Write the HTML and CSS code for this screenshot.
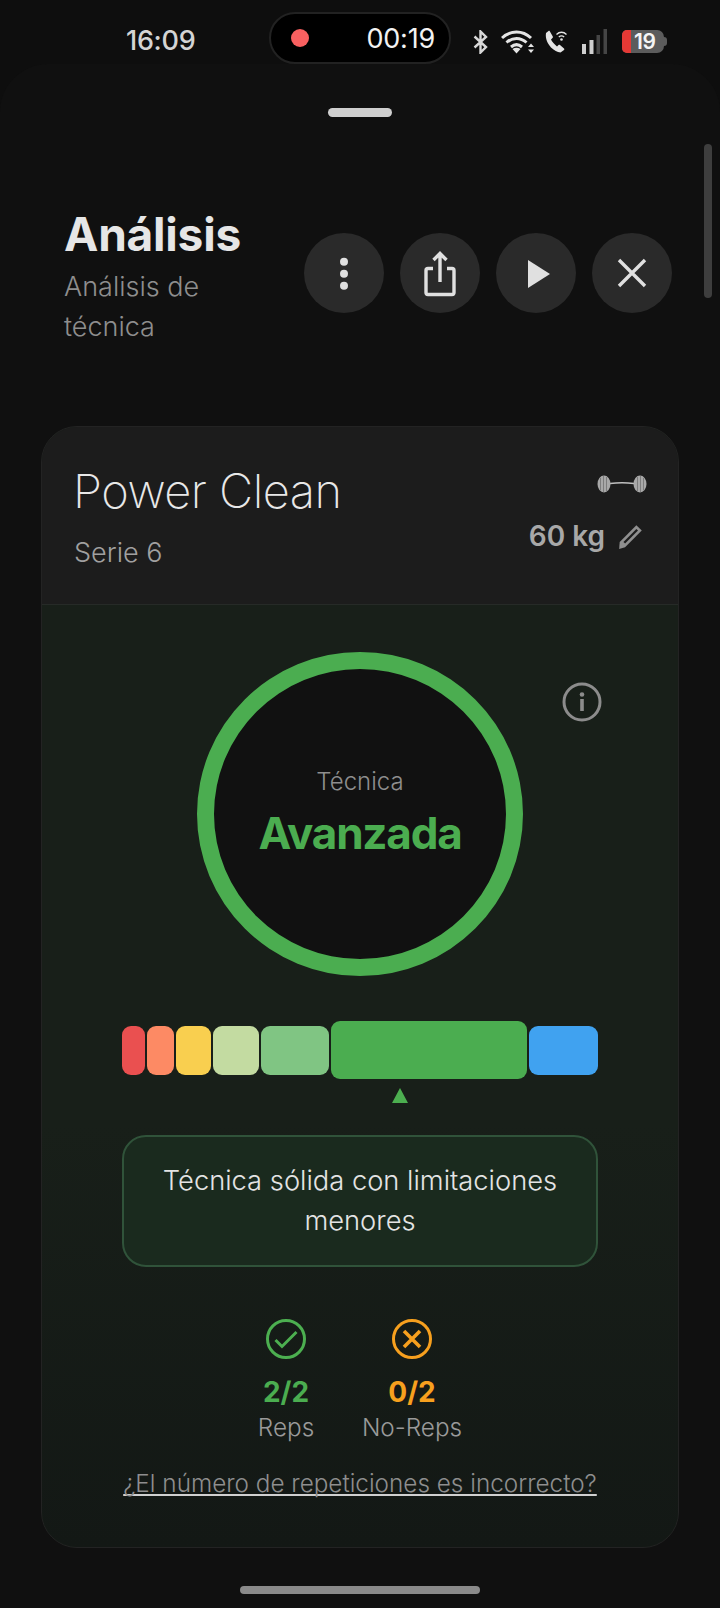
FILE: index.html
```html
<!DOCTYPE html>
<html lang="es">
<head>
<meta charset="utf-8">
<title>Análisis</title>
<link rel="stylesheet" href="styles.css">
</head>
<body>
<div class="screen">
  <div class="status">
    <span class="time">16:09</span>
    <div class="pill"><span class="rec"></span><span class="pill-time">00:19</span></div>
    <div class="sys">
      <svg class="i-bt" width="15" height="24" viewBox="0 0 15 24"><path d="M1.500 6.500 13 17l-5.500 5.500v-21L13 7 1.500 17.500" fill="none" stroke="#d8d8d8" stroke-width="2.400"/></svg>
      <svg class="i-wifi" width="34" height="25" viewBox="0 0 34 25"><path d="M1 9C9.500 1 21.500 1 30 9M5.500 13.500C11.500 8 19.500 8 25.500 13.500M10 18C13.500 15 17.500 15 21 18" fill="none" stroke="#e4e4e4" stroke-width="3"/><path d="m15.500 24.500-4-4.500c2.500-1.800 5.500-1.800 8 0zM30 14.500l3 3.500h-6zM30 24l-3-3.500h6z" fill="#e4e4e4"/></svg>
      <svg class="i-call" width="23" height="23" viewBox="0 0 23 23"><path d="M3.500 1 1 3c-1 6 2 11 5 14.500 3.500 3 6 4.500 9.500 5l3.500-2.500c.5-.5.5-1 0-1.500l-4-3.500c-.5-.3-1-.3-1.500 0l-1.500 1.500C9.500 14.500 7 11.500 6 9.500l1.700-1.700c.3-.4.3-1 .1-1.400L4.800 1.300C4.500.8 4 .7 3.500 1z" fill="#e4e4e4"/><path d="M11.500 4.500c3-3 7-3 10 0M13.800 7c1.700-1.500 3.700-1.500 5.400 0" fill="none" stroke="#e4e4e4" stroke-width="1.300"/><circle cx="16.500" cy="9.500" r="1.300" fill="#e4e4e4"/></svg>
      <svg class="i-signal" width="26" height="25" viewBox="0 0 26 25"><rect x="0" y="15" width="4" height="10" fill="#cfcfcf"/><rect x="7.500" y="11" width="4" height="14" fill="#cfcfcf"/><rect x="14.500" y="6" width="3.500" height="19" fill="#454545"/><rect x="21.500" y="0" width="3.500" height="25" fill="#454545"/></svg>
      <div class="battery"><span class="batt-low"></span><span class="batt-num">19</span></div>
    </div>
  </div>

  <div class="sheet">
    <div class="grabber"></div>
    <header class="head">
      <div class="head-text">
        <h1 class="title">Análisis</h1>
        <p class="subtitle">Análisis de<br>técnica</p>
      </div>
      <div class="actions">
        <div class="round"><svg width="80" height="80" viewBox="0 0 80 80"><circle cx="40" cy="28.700" r="4" fill="#e0e0e0"/><circle cx="40" cy="40.700" r="4" fill="#e0e0e0"/><circle cx="40" cy="52.700" r="4" fill="#e0e0e0"/></svg></div>
        <div class="round"><svg width="80" height="80" viewBox="0 0 80 80"><path d="M33 35.500h-5a2 2 0 0 0-2 2v22a2 2 0 0 0 2 2h24a2 2 0 0 0 2-2v-22a2 2 0 0 0-2-2h-5" fill="none" stroke="#e0e0e0" stroke-width="3.400"/><path d="M40 49V21M33.500 27l6.500-6.500 6.500 6.500" fill="none" stroke="#e0e0e0" stroke-width="3.400"/></svg></div>
        <div class="round"><svg width="80" height="80" viewBox="0 0 80 80"><path d="M32 27v28l22-14z" fill="#e0e0e0"/></svg></div>
        <div class="round"><svg width="80" height="80" viewBox="0 0 80 80"><path d="m27 27 26 26M53 27 27 53" stroke="#e0e0e0" stroke-width="3.400" fill="none"/></svg></div>
      </div>
    </header>

    <section class="card">
      <div class="card-head">
        <div class="ex">
          <h2 class="ex-name">Power Clean</h2>
          <p class="ex-set">Serie 6</p>
        </div>
        <div class="load">
          <svg class="i-bar" width="50" height="20" viewBox="0 0 50 20"><path d="M13 9.500c8-1 16-1 24 0" fill="none" stroke="#c0c0c0" stroke-width="1.500"/><ellipse cx="7" cy="10" rx="6.500" ry="8.500" fill="#a8a8a8"/><ellipse cx="43" cy="10" rx="6.500" ry="8.500" fill="#a8a8a8"/><path d="M3.500 4v12M6.500 2v16M9.500 3v14M40.500 3v14M43.500 2v16M46.500 4v12" stroke="#777" stroke-width=".9"/></svg>
          <div class="weight"><span class="kg">60 kg</span>
            <svg width="28" height="28" viewBox="0 0 26 26"><path d="M2.500 18.500 18 3l5 5L7.500 23.500 2 25z" fill="#8f8f8f"/><path d="M6 18.500 18 6.500l1.500 1.500L7.500 20z" fill="#1c1c1c"/></svg>
          </div>
        </div>
      </div>
      <div class="card-body">
        <div class="gauge-row">
          <div class="gauge">
            <span class="gauge-label">Técnica</span>
            <span class="gauge-value">Avanzada</span>
          </div>
          <svg class="i-info" width="40" height="40" viewBox="0 0 40 40"><circle cx="20" cy="20" r="18" fill="none" stroke="#8c8c8c" stroke-width="3"/><circle cx="20" cy="12.500" r="2.300" fill="#8c8c8c"/><rect x="18.200" y="17" width="3.600" height="12" fill="#8c8c8c"/></svg>
        </div>
        <div class="scale">
          <span class="seg s1"></span><span class="seg s2"></span><span class="seg s3"></span><span class="seg s4"></span><span class="seg s5"></span><span class="seg s6"></span><span class="seg s7"></span>
        </div>
        <div class="pointer"><svg width="16" height="15" viewBox="0 0 16 15"><path d="M8 0l8 15H0z" fill="#4caf50"/></svg></div>
        <div class="note">Técnica sólida con limitaciones menores</div>
        <div class="stats">
          <div class="stat">
            <svg width="40" height="40" viewBox="0 0 40 40"><circle cx="20" cy="20" r="18.500" fill="none" stroke="#4caf50" stroke-width="3"/><path d="m9.500 21 6.500 6.500L30.500 13" fill="none" stroke="#4caf50" stroke-width="3"/></svg>
            <span class="stat-num good">2/2</span>
            <span class="stat-label">Reps</span>
          </div>
          <div class="stat">
            <svg width="40" height="40" viewBox="0 0 40 40"><circle cx="20" cy="20" r="18.500" fill="none" stroke="#f7a01e" stroke-width="3"/><path d="m12 12 16 16M28 12 12 28" fill="none" stroke="#f7a01e" stroke-width="3.600"/></svg>
            <span class="stat-num warn">0/2</span>
            <span class="stat-label">No-Reps</span>
          </div>
        </div>
        <a class="link">¿El número de repeticiones es incorrecto?</a>
      </div>
    </section>
    <div class="home"></div>
    <div class="scrollbar"></div>
  </div>
</div>
</body>
</html>
```
FILE: styles.css
```css
* { box-sizing: border-box; }
html, body { margin: 0; padding: 0; }
body { background: #0e0e0e; font-family: Inter, "Noto Sans", sans-serif; color: #e8e8e8; }
.screen { width: 720px; height: 1608px; overflow: hidden; position: relative; background: #0e0e0e; }

.status { height: 64px; display: flex; align-items: flex-start; padding: 12px 0 0 126px; }
.time { font-size: 27px; font-weight: 500; color: #d4d4d4; line-height: 28px; width: 143px; margin-top: 15px; letter-spacing: -.3px; }
.pill { width: 182px; height: 52px; border-radius: 26px; background: #000; border: 2px solid #222; display: flex; align-items: center; justify-content: space-between; padding: 0 14px 0 20px; }
.rec { width: 18px; height: 18px; border-radius: 50%; background: #f96060; }
.pill-time { font-size: 27px; font-weight: 400; color: #f2f2f2; letter-spacing: -.2px; }
.sys { display: flex; align-items: center; margin: 17px 0 0 22px; height: 25px; }
.i-wifi { margin-left: 13px; }
.i-call { margin-left: 10px; }
.i-signal { margin-left: 14px; }
.battery { margin-left: 14px; width: 42px; height: 23px; border-radius: 5px 7px 7px 5px; background: #5c5c5c; position: relative; display: flex; align-items: center; }
.battery::after { content: ""; position: absolute; right: -3px; top: 7px; width: 3px; height: 9px; border-radius: 0 3px 3px 0; background: #5c5c5c; }
.batt-low { width: 9px; height: 23px; background: #e53935; border-radius: 5px 0 0 5px; flex: none; }
.batt-num { font-size: 21px; font-weight: 600; color: #f5f5f5; margin-left: 3px; line-height: 23px; letter-spacing: -.5px; }

.sheet { height: 1544px; background: #101010; border-radius: 48px 48px 0 0; display: flex; flex-direction: column; align-items: stretch; position: relative; }
.grabber { width: 64px; height: 9px; border-radius: 5px; background: #cfcfcf; margin: 44px auto 0; }

.head { display: flex; justify-content: space-between; padding: 0 48px 0 64px; margin-top: 90px; align-items: flex-start; }
.title { margin: 0; font-size: 46px; font-weight: 700; line-height: 54px; color: #e6e6e6; letter-spacing: -.2px; }
.subtitle { margin: 6px 0 0; font-size: 27px; font-weight: 300; line-height: 40px; color: #8e8e8e; }
.actions { display: flex; gap: 16px; margin-top: 26px; }
.round { width: 80px; height: 80px; border-radius: 50%; background: #2a2a2a; }
.round svg { display: block; }

.card { margin: 79px 41px 0; height: 1122px; border: 1px solid #232323; border-radius: 36px; overflow: hidden; display: flex; flex-direction: column; background: #181f19; }
.card-head { height: 178px; background: #1c1c1c; border-bottom: 1px solid #262a27; display: flex; justify-content: space-between; padding: 0 32px 0 31px; flex: none; }
.ex-name { margin: 37px 0 0; font-size: 47px; font-weight: 250; line-height: 54px; color: #e8e8e8; letter-spacing: -.5px; }
.ex-set { margin: 19px 0 0 1px; font-size: 27px; font-weight: 300; line-height: 32px; color: #a0a0a0; }
.load { display: flex; flex-direction: column; align-items: flex-end; padding-top: 47px; }
.i-bar { display: block; margin-right: -1px; }
.weight { display: flex; align-items: center; gap: 12px; margin-top: 25px; margin-right: 1px; }
.kg { font-size: 28px; font-weight: 600; color: #a8a8a8; }

.card-body { flex: 1; display: flex; flex-direction: column; align-items: center; background: linear-gradient(180deg, #181f19 0%, #181f19 55%, #131815 100%); position: relative; }
.gauge-row { width: 100%; display: flex; justify-content: center; position: relative; padding-top: 47px; }
.gauge { width: 326px; height: 324px; border-radius: 50%; border: 17px solid #4bad50; background: #111; display: flex; flex-direction: column; align-items: center; padding-top: 98px; }
.gauge-label { font-size: 24px; font-weight: 300; color: #8e8e8e; line-height: 30px; }
.gauge-value { font-size: 44px; font-weight: 700; color: #4bad50; line-height: 50px; margin-top: 11px; letter-spacing: -1.200px; }
.i-info { position: absolute; right: 76px; top: 77px; }

.scale { width: 476px; height: 58px; display: flex; gap: 2px; align-items: center; margin-top: 45px; }
.seg { height: 49px; border-radius: 9px; display: block; }
.s1 { width: 23px; background: #ea5050; }
.s2 { width: 27.300px; background: #fd8a64; }
.s3 { width: 34.400px; background: #f9cf4f; }
.s4 { width: 46px; background: #c3dba1; }
.s5 { width: 68.600px; background: #80c583; }
.s6 { width: 196px; height: 58px; background: #4bad50; }
.s7 { width: 68.700px; background: #40a2f0; }
.pointer { width: 476px; height: 15px; margin-top: 9px; padding-left: 270px; }
.pointer svg { display: block; }

.note { width: 476px; height: 132px; margin-top: 32px; border: 2px solid #30533a; border-radius: 24px; background: #1a2a1e; display: flex; align-items: center; justify-content: center; text-align: center; font-size: 27.300px; font-weight: 300; line-height: 40px; color: #e4e4e4; padding: 0 30px; }

.stats { display: flex; justify-content: center; margin-top: 52px; padding-right: 22px; }
.stat { width: 126px; display: flex; flex-direction: column; align-items: center; }
.stat svg { display: block; }
.stat-num { font-size: 28px; font-weight: 700; line-height: 34px; margin-top: 16px; }
.good { color: #4bad50; }
.warn { color: #f7a01e; }
.stat-label { font-size: 24.300px; font-weight: 300; line-height: 30px; color: #9a9a9a; margin-top: 3px; }
.link { margin-top: 26px; font-size: 24.300px; font-weight: 300; line-height: 30px; color: #8e8e8e; text-decoration: underline; text-decoration-color: #d0d0d0; text-decoration-skip-ink: none; white-space: nowrap; }

.home { width: 240px; height: 8px; border-radius: 4px; background: #8a8a8a; margin: 38px auto 0; }
.scrollbar { position: absolute; right: 8px; top: 80px; width: 8px; height: 154px; border-radius: 4px; background: #3e3e3e; }
```
